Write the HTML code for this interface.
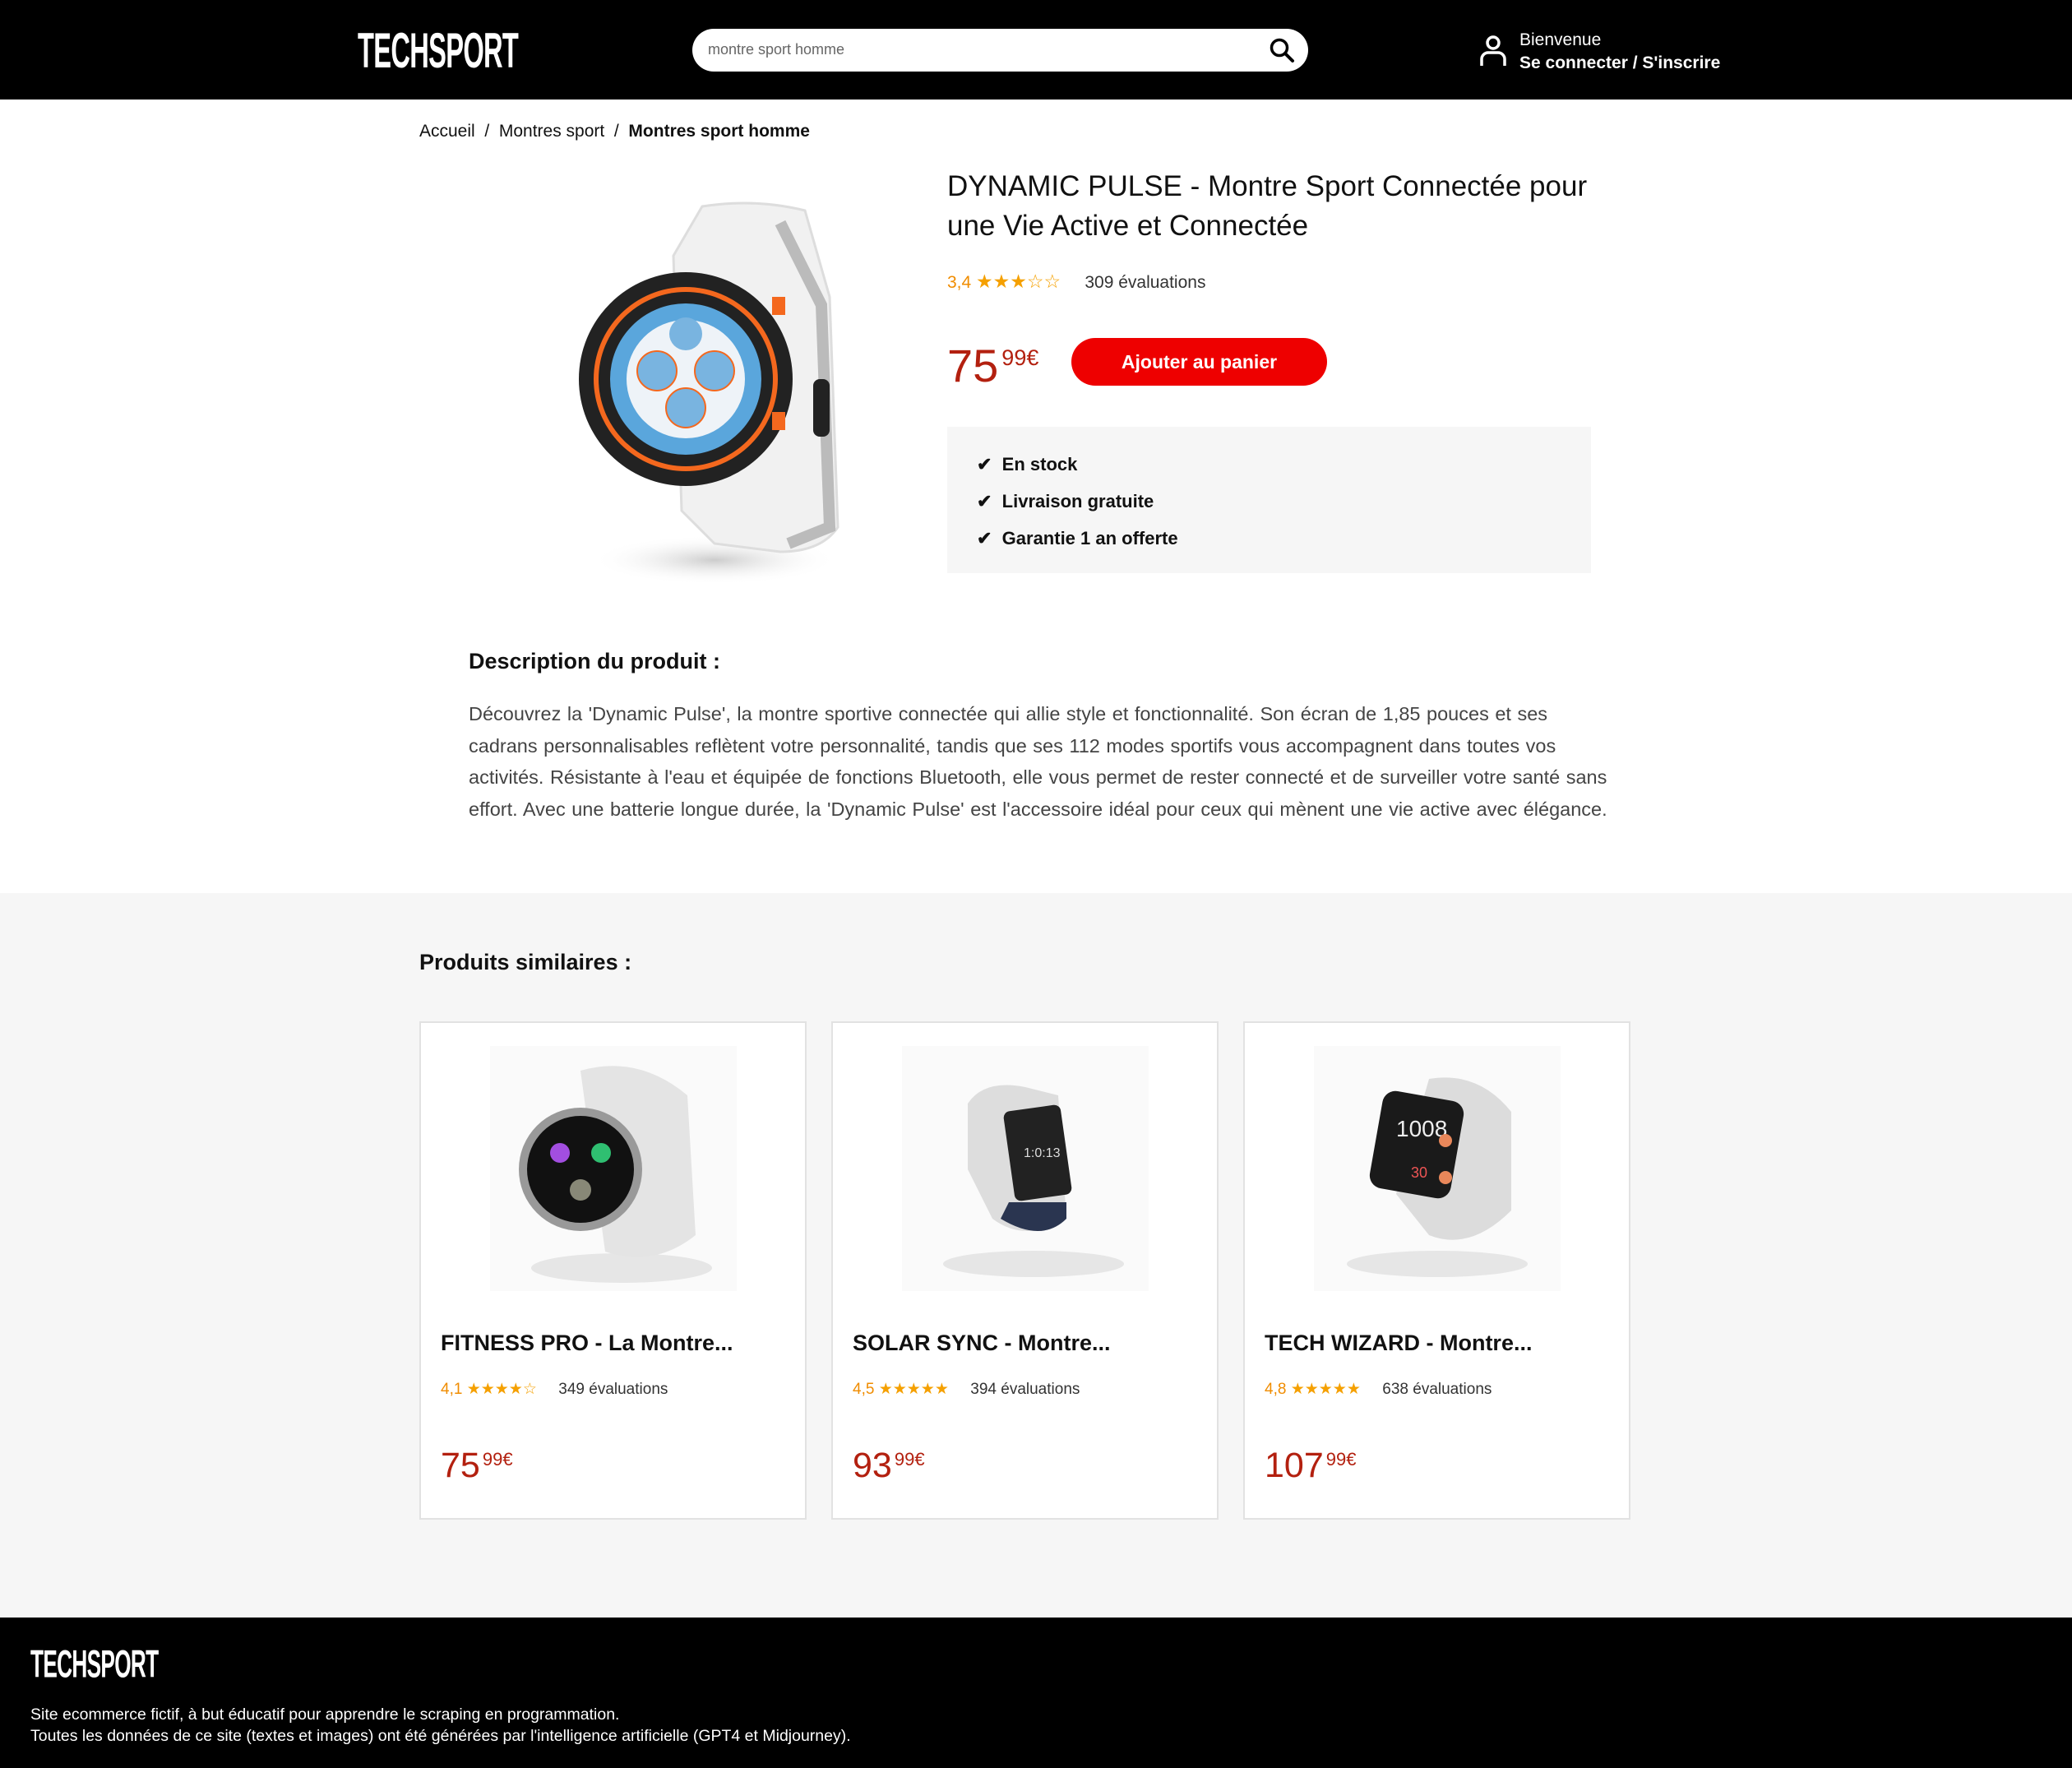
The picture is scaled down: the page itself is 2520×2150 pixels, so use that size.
<!DOCTYPE html>
<html><head><meta charset="utf-8"><style>
*{margin:0;padding:0;box-sizing:border-box}
body{width:2520px;height:2150px;position:relative;background:#fff;font-family:"Liberation Sans",sans-serif;color:#111;overflow:hidden}
.abs{position:absolute}
.logo{font-family:"Liberation Sans Narrow","Liberation Sans",sans-serif;font-weight:bold;color:#fff;letter-spacing:-1px;transform-origin:left top;white-space:nowrap}
.stars{color:#f5a000}
.org{color:#f08c00}
.price{color:#b3200f;white-space:nowrap}
.card{position:absolute;top:1242px;width:471px;height:606px;background:#fff;border:2px solid #e2e2e2}
</style></head><body>
<!-- header -->
<div class="abs" style="left:0;top:0;width:2520px;height:121px;background:#000"></div>
<div class="abs logo" style="left:435px;top:28px;font-size:48px;transform:scale(0.68,1.25)">TECHSPORT</div>
<div class="abs" style="left:842px;top:35px;width:749px;height:52px;background:#fff;border-radius:26px"></div>
<div class="abs" style="left:861px;top:50px;font-size:18px;color:#666">montre sport homme</div>
<svg class="abs" style="left:1543px;top:45px" width="32" height="32" viewBox="0 0 32 32"><circle cx="13" cy="13" r="9.5" fill="none" stroke="#000" stroke-width="3.5"/><line x1="20" y1="20" x2="29" y2="29" stroke="#000" stroke-width="4" stroke-linecap="round"/></svg>
<svg class="abs" style="left:1799px;top:42px" width="34" height="40" viewBox="0 0 34 40"><circle cx="17" cy="10" r="7" fill="none" stroke="#fff" stroke-width="3.5"/><path d="M3 38V30a8 8 0 0 1 8-8h12a8 8 0 0 1 8 8v8" fill="none" stroke="#fff" stroke-width="3.5"/></svg>
<div class="abs" style="left:1848px;top:37px;font-size:21px;color:#fff">Bienvenue</div>
<div class="abs" style="left:1848px;top:65px;font-size:21px;color:#fff;font-weight:bold">Se connecter / S'inscrire</div>
<!-- breadcrumb -->
<div class="abs" style="left:510px;top:148px;font-size:21px">Accueil &nbsp;/&nbsp; Montres sport &nbsp;/&nbsp; <b>Montres sport homme</b></div>
<!-- main image -->
<svg class="abs" style="left:619px;top:201px" width="482" height="522" viewBox="0 0 482 522">
<defs><radialGradient id="sh" cx="0.5" cy="0.5" r="0.5"><stop offset="0" stop-color="#ccc"/><stop offset="1" stop-color="#fff" stop-opacity="0"/></radialGradient></defs>
<ellipse cx="250" cy="480" rx="150" ry="30" fill="url(#sh)"/>
<path d="M200 110 L235 50 Q300 40 360 55 L390 160 L400 440 Q380 470 330 470 L250 460 L210 420 Z" fill="#f1f1f1" stroke="#ddd" stroke-width="3"/>
<path d="M330 70 L380 170 L390 440 L340 460" fill="none" stroke="#bbb" stroke-width="14"/>
<circle cx="215" cy="260" r="130" fill="#222"/>
<circle cx="215" cy="260" r="112" fill="#f4681e"/>
<circle cx="215" cy="260" r="106" fill="#222"/>
<circle cx="215" cy="260" r="92" fill="#5aa6dc"/>
<circle cx="215" cy="260" r="72" fill="#eef3f8"/>
<circle cx="180" cy="250" r="24" fill="#79b4e0" stroke="#f4681e" stroke-width="2"/>
<circle cx="250" cy="250" r="24" fill="#79b4e0" stroke="#f4681e" stroke-width="2"/>
<circle cx="215" cy="295" r="24" fill="#79b4e0" stroke="#f4681e" stroke-width="2"/>
<circle cx="215" cy="205" r="20" fill="#79b4e0"/>
<rect x="320" y="160" width="16" height="22" fill="#f4681e"/><rect x="320" y="300" width="16" height="22" fill="#f4681e"/>
<rect x="370" y="260" width="20" height="70" rx="8" fill="#222"/>
</svg>
<!-- product info -->
<div class="abs" style="left:1152px;top:203px;font-size:35px;line-height:48px;color:#111;width:820px">DYNAMIC PULSE - Montre Sport Connectée pour une Vie Active et Connectée</div>
<div class="abs" style="left:1152px;top:329px;font-size:21px;white-space:nowrap"><span class="org">3,4</span> <span class="stars" style="font-size:23px">★★★☆☆</span> &nbsp;&nbsp;&nbsp; <span style="color:#333">309 évaluations</span></div>
<div class="abs price" style="left:1152px;top:412px;font-size:56px">75<sup style="font-size:27px;vertical-align:top;position:relative;top:8px;margin-left:4px">99€</sup></div>
<div class="abs" style="left:1303px;top:411px;width:311px;height:58px;background:#ee0000;border-radius:29px;color:#fff;font-weight:bold;font-size:23px;text-align:center;line-height:58px">Ajouter au panier</div>
<div class="abs" style="left:1152px;top:519px;width:783px;height:178px;background:#f6f6f6"></div>
<div class="abs" style="left:1188px;top:542px;font-size:22px;font-weight:bold;line-height:45px">✔&nbsp; En stock<br>✔&nbsp; Livraison gratuite<br>✔&nbsp; Garantie 1 an offerte</div>
<!-- description -->
<div class="abs" style="left:570px;top:789px;font-size:27px;font-weight:bold">Description du produit :</div>
<div class="abs" style="left:570px;top:849px;width:1385px;font-size:23.5px;line-height:38.7px;color:#444;word-spacing:1px">Découvrez la 'Dynamic Pulse', la montre sportive connectée qui allie style et fonctionnalité. Son écran de 1,85 pouces et ses cadrans personnalisables reflètent votre personnalité, tandis que ses 112 modes sportifs vous accompagnent dans toutes vos activités. Résistante à l'eau et équipée de fonctions Bluetooth, elle vous permet de rester connecté et de surveiller votre santé sans effort. Avec une batterie longue durée, la 'Dynamic Pulse' est l'accessoire idéal pour ceux qui mènent une vie active avec élégance.</div>
<!-- similar -->
<div class="abs" style="left:0;top:1086px;width:2520px;height:881px;background:#f6f6f6"></div>
<div class="abs" style="left:510px;top:1155px;font-size:27px;font-weight:bold">Produits similaires :</div>

<div class="card" style="left:510px">
<svg class="abs" style="left:84px;top:28px" width="300" height="298" viewBox="0 0 300 298"><rect width="300" height="298" fill="#fafafa"/><ellipse cx="160" cy="270" rx="110" ry="18" fill="#e6e6e6"/><path d="M110 30 Q180 10 240 60 L250 230 Q200 270 140 250 Z" fill="#e4e4e4"/><circle cx="110" cy="150" r="75" fill="#999"/><circle cx="110" cy="150" r="65" fill="#111"/><circle cx="85" cy="130" r="12" fill="#a24ee0"/><circle cx="135" cy="130" r="12" fill="#2fbf71"/><circle cx="110" cy="175" r="13" fill="#887"/></svg>
<div class="abs" style="left:24px;top:374px;font-size:27px;font-weight:bold">FITNESS PRO - La Montre...</div>
<div class="abs" style="left:24px;top:434px;font-size:19px;white-space:nowrap"><span class="org">4,1</span> <span class="stars">★★★★☆</span> &nbsp;&nbsp;&nbsp; <span style="color:#333">349 évaluations</span></div>
<div class="abs price" style="left:24px;top:514px;font-size:43px">75<sup style="font-size:22px;vertical-align:top;position:relative;top:4px;margin-left:3px">99€</sup></div>
</div>
<div class="card" style="left:1011px">
<svg class="abs" style="left:84px;top:28px" width="300" height="298" viewBox="0 0 300 298"><rect width="300" height="298" fill="#fafafa"/><ellipse cx="160" cy="265" rx="110" ry="16" fill="#e6e6e6"/><path d="M80 70 Q100 40 150 50 L190 60 L200 210 Q150 240 110 210 L80 150 Z" fill="#ddd"/><path d="M120 210 Q170 240 200 210 L200 190 L130 190 Z" fill="#2a3550"/><rect x="130" y="75" width="70" height="110" rx="8" fill="#222" transform="rotate(-8 165 130)"/><text x="148" y="135" font-size="16" fill="#ddd" font-family="Liberation Sans">1:0:13</text></svg>
<div class="abs" style="left:24px;top:374px;font-size:27px;font-weight:bold">SOLAR SYNC - Montre...</div>
<div class="abs" style="left:24px;top:434px;font-size:19px;white-space:nowrap"><span class="org">4,5</span> <span class="stars">★★★★★</span> &nbsp;&nbsp;&nbsp; <span style="color:#333">394 évaluations</span></div>
<div class="abs price" style="left:24px;top:514px;font-size:43px">93<sup style="font-size:22px;vertical-align:top;position:relative;top:4px;margin-left:3px">99€</sup></div>
</div>
<div class="card" style="left:1512px">
<svg class="abs" style="left:84px;top:28px" width="300" height="298" viewBox="0 0 300 298"><rect width="300" height="298" fill="#fafafa"/><ellipse cx="150" cy="265" rx="110" ry="16" fill="#e6e6e6"/><path d="M140 40 Q200 30 240 80 L240 200 Q190 250 140 230 L100 180 Z" fill="#dcdcdc"/><rect x="75" y="60" width="100" height="120" rx="16" fill="#1a1a1a" transform="rotate(10 125 120)"/><text x="100" y="110" font-size="28" fill="#eee" font-family="Liberation Sans">1008</text><text x="118" y="160" font-size="18" fill="#e55" font-family="Liberation Sans">30</text><circle cx="160" cy="115" r="8" fill="#e8875a"/><circle cx="160" cy="160" r="8" fill="#e8875a"/></svg>
<div class="abs" style="left:24px;top:374px;font-size:27px;font-weight:bold">TECH WIZARD - Montre...</div>
<div class="abs" style="left:24px;top:434px;font-size:19px;white-space:nowrap"><span class="org">4,8</span> <span class="stars">★★★★★</span> &nbsp;&nbsp;&nbsp; <span style="color:#333">638 évaluations</span></div>
<div class="abs price" style="left:24px;top:514px;font-size:43px">107<sup style="font-size:22px;vertical-align:top;position:relative;top:4px;margin-left:3px">99€</sup></div>
</div>
<!-- footer -->
<div class="abs" style="left:0;top:1967px;width:2520px;height:183px;background:#000"></div>
<div class="abs logo" style="left:37px;top:1998px;font-size:38px;transform:scale(0.69,1.25)">TECHSPORT</div>
<div class="abs" style="left:37px;top:2072px;font-size:19.5px;line-height:26px;color:#fff">Site ecommerce fictif, à but éducatif pour apprendre le scraping en programmation.<br>Toutes les données de ce site (textes et images) ont été générées par l'intelligence artificielle (GPT4 et Midjourney).</div>
</body></html>
